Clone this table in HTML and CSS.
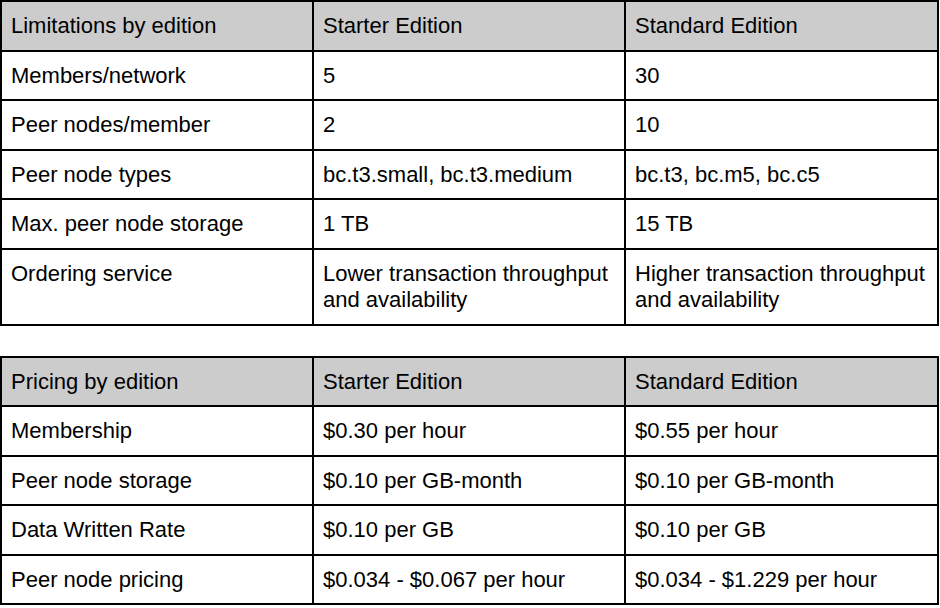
FILE: index.html
```html
<!DOCTYPE html>
<html>
<head>
<meta charset="utf-8">
<link rel="stylesheet" href="styles.css">
</head>
<body>
<table class="grid">
  <colgroup><col class="c1"><col class="c2"><col class="c3"></colgroup>
  <tr class="head"><td>Limitations by edition</td><td>Starter Edition</td><td>Standard Edition</td></tr>
  <tr><td>Members/network</td><td>5</td><td>30</td></tr>
  <tr><td>Peer nodes/member</td><td>2</td><td>10</td></tr>
  <tr><td>Peer node types</td><td>bc.t3.small, bc.t3.medium</td><td>bc.t3, bc.m5, bc.c5</td></tr>
  <tr><td>Max. peer node storage</td><td>1 TB</td><td>15 TB</td></tr>
  <tr><td>Ordering service</td><td>Lower transaction throughput and availability</td><td>Higher transaction throughput and availability</td></tr>
</table>
<table class="grid second">
  <colgroup><col class="c1"><col class="c2"><col class="c3"></colgroup>
  <tr class="head"><td>Pricing by edition</td><td>Starter Edition</td><td>Standard Edition</td></tr>
  <tr><td>Membership</td><td>$0.30 per hour</td><td>$0.55 per hour</td></tr>
  <tr><td>Peer node storage</td><td>$0.10 per GB-month</td><td>$0.10 per GB-month</td></tr>
  <tr><td>Data Written Rate</td><td>$0.10 per GB</td><td>$0.10 per GB</td></tr>
  <tr><td>Peer node pricing</td><td>$0.034 - $0.067 per hour</td><td>$0.034 - $1.229 per hour</td></tr>
</table>
</body>
</html>
```
FILE: styles.css
```css
html, body {
  margin: 0;
  padding: 0;
  background: #ffffff;
}
body {
  font-family: "Liberation Sans", Arial, sans-serif;
  font-size: 22px;
  line-height: 26.5px;
  color: #000000;
}
.grid {
  width: 939px;
  table-layout: fixed;
  border-collapse: separate;
  border-spacing: 0;
  border-top: 2px solid #000;
  border-left: 2px solid #000;
}
.grid .c1 { width: 312px; }
.grid .c2 { width: 312px; }
.grid .c3 { width: 313px; }
.grid td {
  border-right: 2px solid #000;
  border-bottom: 2px solid #000;
  padding: 11px 8px 10px 9px;
  vertical-align: top;
  text-align: left;
}
.grid .head td {
  background: #cccccc;
}
.second {
  margin-top: 30px;
}
```
